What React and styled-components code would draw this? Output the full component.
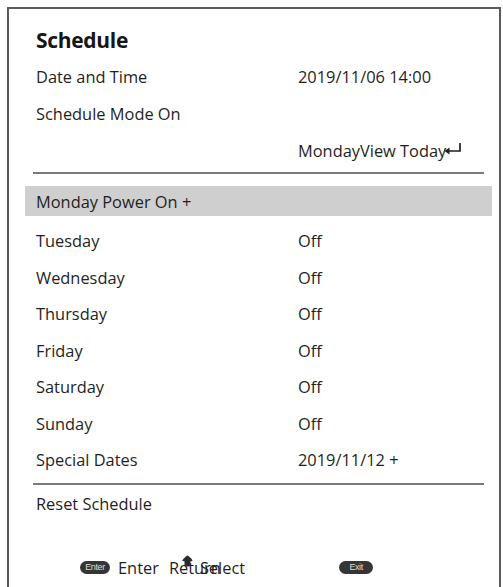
import React from "react";
import styled, { createGlobalStyle } from "styled-components";

const GlobalStyle = createGlobalStyle`
  html, body {
    margin: 0;
    padding: 0;
    background: #fff;
  }
  body {
    font-family: "Open Sans", "Liberation Sans", sans-serif;
    color: #1f1f1f;
  }
`;

const days = ["Tuesday", "Wednesday", "Thursday", "Friday", "Saturday", "Sunday"];

export default function App() {
  return (
    <>
      <GlobalStyle />
      <Frame>
        <Title>Schedule</Title>
        <Row>
          <Label>Date and Time</Label>
          <Value>2019/11/06 14:00</Value>
        </Row>
        <Row>
          <Label>Schedule Mode On</Label>
        </Row>
        <Row>
          <Label />
          <Value>
            MondayView Today
            <ReturnIcon />
          </Value>
        </Row>
        <Divider />
        <Highlight>Monday Power On +</Highlight>
        <DayList>
          {days.map((d) => (
            <DayRow key={d}>
              <Label>{d}</Label>
              <Value>Off</Value>
            </DayRow>
          ))}
          <DayRow>
            <Label>Special Dates</Label>
            <Value>2019/11/12 +</Value>
          </DayRow>
        </DayList>
        <Divider $top={5} />
        <Row $h={37}>
          <Label>Reset Schedule</Label>
        </Row>
        <Footer>
          <Pill>Enter</Pill>
          <FootText>Enter</FootText>
          <Overlap>
            <FootText>Return</FootText>
            <FootText $pull>Select</FootText>
            <UpIcon />
          </Overlap>
          <ExitPill>Exit</ExitPill>
        </Footer>
      </Frame>
    </>
  );
}

function ReturnIcon() {
  return (
    <svg width="19" height="14" viewBox="0 0 19 14" style={{ marginLeft: -3, marginBottom: 4 }}>
      <path d="M17 1 V9 H4" fill="none" stroke="#1f1f1f" strokeWidth="1.7" />
      <path d="M6.5 5.5 L1.5 9 L6.5 12.5 Z" fill="#1f1f1f" />
    </svg>
  );
}

function UpIcon() {
  return (
    <UpWrap>
      <svg width="11" height="12" viewBox="0 0 11 12">
        <path
          d="M5.5 0.5 C6.5 0.5 10.5 4.5 10.5 5.5 C10.5 6.2 9.5 6.2 8.5 6.2 L8.5 10.5 C8.5 11.3 7.8 11.5 5.5 11.5 C3.2 11.5 2.5 11.3 2.5 10.5 L2.5 6.2 C1.5 6.2 0.5 6.2 0.5 5.5 C0.5 4.5 4.5 0.5 5.5 0.5 Z"
          fill="#2b2b2b"
        />
      </svg>
    </UpWrap>
  );
}

const Frame = styled.div`
  margin: 7px 2px 0 7px;
  height: 600px;
  border: 2px solid #5a5a5a;
  border-bottom: none;
  box-sizing: border-box;
  display: flex;
  flex-direction: column;
`;

const Title = styled.div`
  margin: 13px 0 0 27px;
  height: 36px;
  line-height: 36px;
  font-size: 21px;
  font-weight: 700;
  color: #161616;
  letter-spacing: -0.3px;
`;

const Row = styled.div`
  display: grid;
  grid-template-columns: 262px 1fr;
  align-items: center;
  height: ${(p) => p.$h || 37}px;
  padding-left: 27px;
  font-size: 16.4px;
`;

const DayList = styled.div`
  margin-top: 6.5px;
  display: flex;
  flex-direction: column;
`;

const DayRow = styled(Row)`
  height: 36.5px;
`;

const Label = styled.span`
  white-space: nowrap;
`;

const Value = styled.span`
  display: flex;
  align-items: center;
  white-space: nowrap;
`;

const Divider = styled.div`
  margin: ${(p) => p.$top ?? 3}px 15px 0 24px;
  height: 2px;
  background: #7a7a7a;
`;

const Highlight = styled.div`
  margin: 12px 7px 0 16px;
  height: 30px;
  padding-left: 11px;
  display: flex;
  align-items: center;
  background: #cfcfcf;
  font-size: 16.4px;
`;

const Footer = styled.div`
  margin-top: 34px;
  height: 22px;
  display: flex;
  align-items: center;
  padding-left: 71px;
`;

const Pill = styled.span`
  display: inline-flex;
  align-items: center;
  justify-content: center;
  width: 30px;
  height: 13px;
  border-radius: 7px;
  background: #353535;
  color: #dcdcdc;
  font-size: 9px;
  font-family: "Liberation Sans", sans-serif;
  letter-spacing: -0.4px;
`;

const ExitPill = styled(Pill)`
  width: 34px;
  margin-left: 94px;
`;

const FootText = styled.span`
  font-size: 16.4px;
  margin-left: ${(p) => (p.$pull ? "-21px" : "8px")};
  white-space: nowrap;
`;

const Overlap = styled.span`
  position: relative;
  display: inline-flex;
  align-items: center;
  margin-left: 2px;
`;

const UpWrap = styled.span`
  position: absolute;
  left: 21px;
  top: -1px;
  display: flex;
`;
